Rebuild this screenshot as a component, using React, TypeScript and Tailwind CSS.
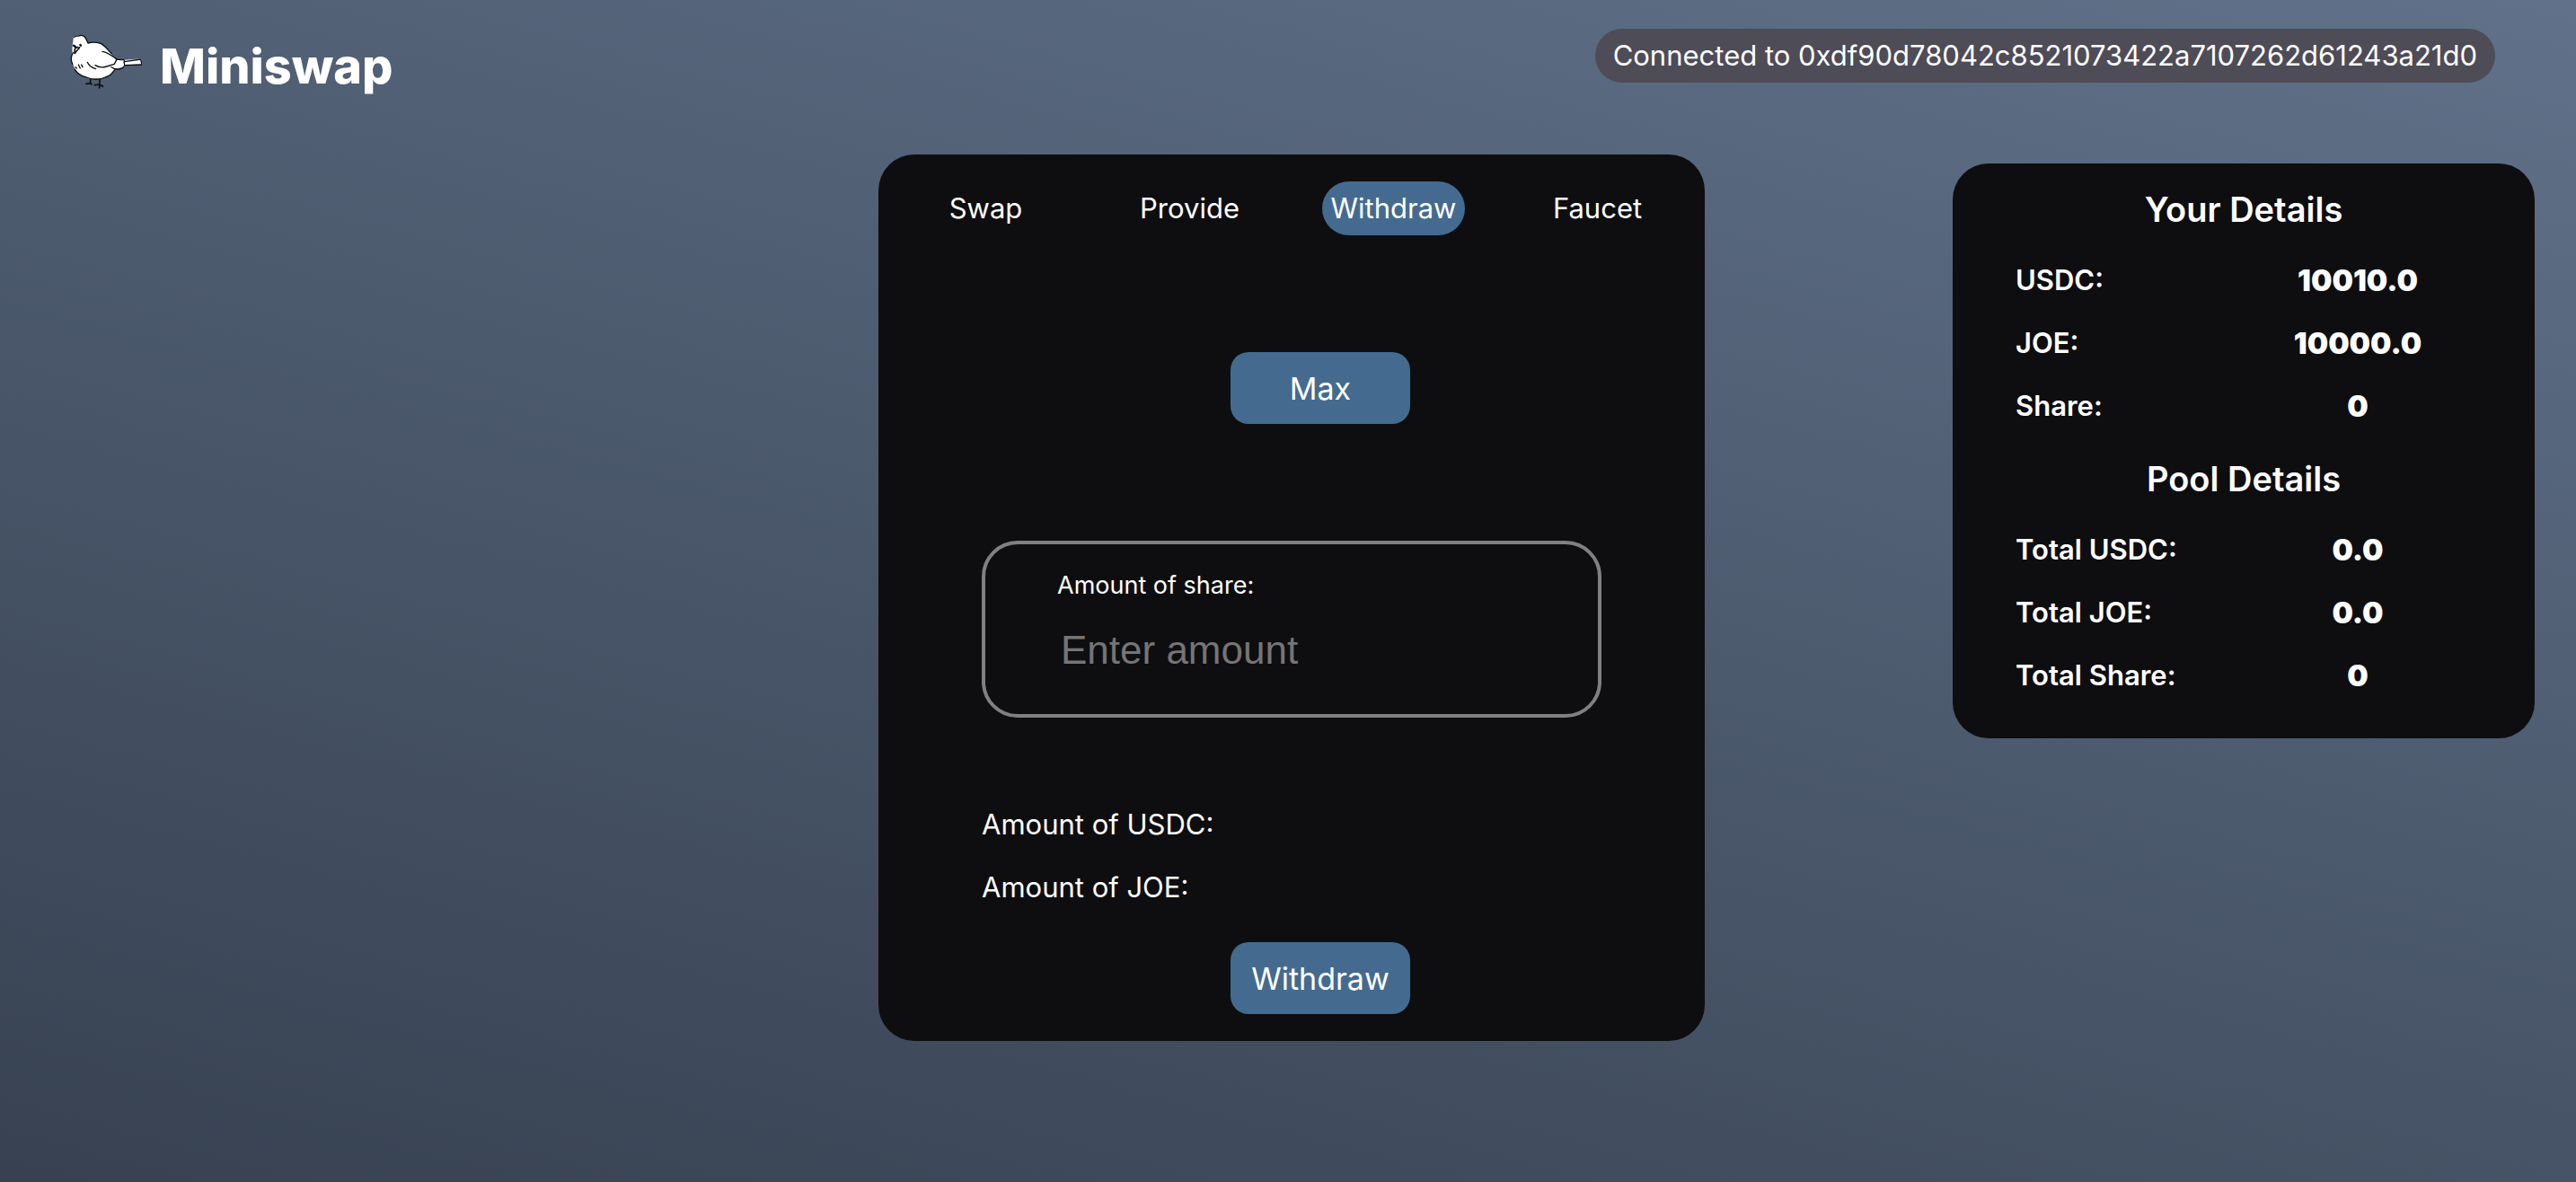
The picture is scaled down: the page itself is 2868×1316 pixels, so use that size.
import React, { useState } from "react";

const TABS = ["Swap", "Provide", "Withdraw", "Faucet"];

const YOUR_DETAILS = [
  ["USDC:", "10010.0"],
  ["JOE:", "10000.0"],
  ["Share:", "0"],
];

const POOL_DETAILS = [
  ["Total USDC:", "0.0"],
  ["Total JOE:", "0.0"],
  ["Total Share:", "0"],
];

function BirdLogo() {
  return (
    <svg className="mt-0.5 h-[66px] w-[84px] shrink-0" viewBox="0 0 252 198" fill="none" stroke="#0e0e10" strokeWidth="4" strokeLinecap="round" strokeLinejoin="round" aria-hidden="true">
      <path d="M80 158V176M80 176L66 178M80 176L84 180M112 160L110 180M110 180L94 182M110 180L122 187M110 180L110 192" strokeWidth="5" />
      <path d="M24 20C30 16 48 16 56 18C64 22 70 32 72 42C88 38 104 40 116 46C132 56 142 70 150 80L166 96L196 98L250 94L252 112L196 116C188 124 172 126 162 126C162 138 144 150 130 156C108 164 76 164 56 152C36 144 26 128 22 112C16 104 14 96 16 86L20 70C18 60 22 36 24 20Z" fill="#fff" stroke="none" />
      <path d="M26 22C30 16 36 20 42 18C50 14 62 18 64 26C68 32 70 38 72 42C84 38 104 38 116 44C130 52 140 66 150 76M22 74C16 84 14 100 20 112M28 130C36 144 50 152 66 156C86 164 112 164 130 156C142 152 150 146 154 140L162 130" />
      <path d="M120 70C136 72 150 82 168 96L160 112M70 106C74 116 84 124 98 128M96 116C108 124 122 124 134 120L160 112M150 122C158 128 172 132 186 126C194 120 196 116 192 106C196 98 190 96 184 98L166 96M194 104L248 96L252 114L196 116" />
      <path d="M30 122L34 126M40 114L46 126M50 114L54 122" />
      <path d="M24 50L30 54M46 48L48 50" strokeWidth="7" />
      <path d="M38 56C32 56 26 60 28 66L27 76M44 56C40 64 32 68 28 76" strokeWidth="5" />
    </svg>
  );
}

function DetailTable({ title, rows }: { title: string; rows: string[][] }) {
  return (
    <table className="w-full table-fixed border-collapse">
      <caption className="pt-[22px] pb-5 text-[38px] leading-[48px] font-semibold">{title}</caption>
      <tbody>
        {rows.map(([label, value]) => (
          <tr key={label} className="h-[70px]">
            <th scope="row" className="p-0 text-left text-[31px] leading-[38px] font-semibold">{label}</th>
            <td className="p-0 text-center text-[33px] leading-[38px] font-black">{value}</td>
          </tr>
        ))}
      </tbody>
    </table>
  );
}

export default function App() {
  const [tab, setTab] = useState("Withdraw");
  const [amount, setAmount] = useState("");
  return (
    <div className="min-h-screen bg-linear-[15deg,#374151,#607189] font-['Inter','Liberation_Sans',sans-serif] text-white">
      <header className="flex items-start justify-between pt-8 pr-[90px] pl-[74px]">
        <div className="flex items-start gap-5">
          <BirdLogo />
          <h1 className="pt-2 text-[54px] leading-[68px] font-extrabold">Miniswap</h1>
        </div>
        <div className="rounded-[30px] bg-[#4e4c57] px-5 py-[10px] text-[31px] leading-10">
          Connected to 0xdf90d78042c8521073422a7107262d61243a21d0
        </div>
      </header>

      <div className="grid grid-cols-[1fr_920px_1fr] items-start pt-16 pr-[46px] pl-[54px]">
        <main className="col-start-2 flex flex-col rounded-[40px] bg-[#0e0e10] py-[30px]">
          <nav className="mx-[6px] grid grid-cols-4 text-[31px] leading-10">
            {TABS.map((name) => (
              <button
                key={name}
                type="button"
                onClick={() => setTab(name)}
                aria-pressed={tab === name}
                className={
                  tab === name
                    ? "justify-self-center rounded-[30px] bg-[#446b8f] px-[10px] py-[10px]"
                    : "justify-self-center rounded-[30px] px-[10px] py-[10px]"
                }
              >
                {name}
              </button>
            ))}
          </nav>
          <button type="button" className="mt-[130px] ml-[392px] h-20 w-[200px] rounded-[20px] bg-[#446b8f] text-[34px]">Max</button>
          <div className="mx-[115px] mt-[130px] flex h-[197px] flex-col rounded-[40px] border-4 border-[#808080] px-20 pt-[26px]">
            <label htmlFor="share" className="text-[27px] leading-10">Amount of share:</label>
            <input
              id="share"
              value={amount}
              onChange={(e) => setAmount(e.target.value)}
              placeholder="Enter amount"
              className="mt-[26px] w-full bg-transparent px-1 font-['Liberation_Sans',Arial,sans-serif] text-[44px] leading-[52px] outline-none placeholder:text-[#757575]"
            />
          </div>
          <div className="mx-[115px] mt-[84px] text-[31px] leading-[70px]">
            <p>Amount of USDC:</p>
            <p>Amount of JOE:</p>
          </div>
          <button type="button" className="mt-[26px] ml-[392px] h-20 w-[200px] rounded-[20px] bg-[#446b8f] text-[34px]">Withdraw</button>
        </main>
        <aside className="mt-[10px] w-[648px] justify-self-end rounded-[40px] bg-[#0e0e10] px-[70px] pt-[5px] pb-[35px]">
          <DetailTable title="Your Details" rows={YOUR_DETAILS} />
          <DetailTable title="Pool Details" rows={POOL_DETAILS} />
        </aside>
      </div>
    </div>
  );
}
